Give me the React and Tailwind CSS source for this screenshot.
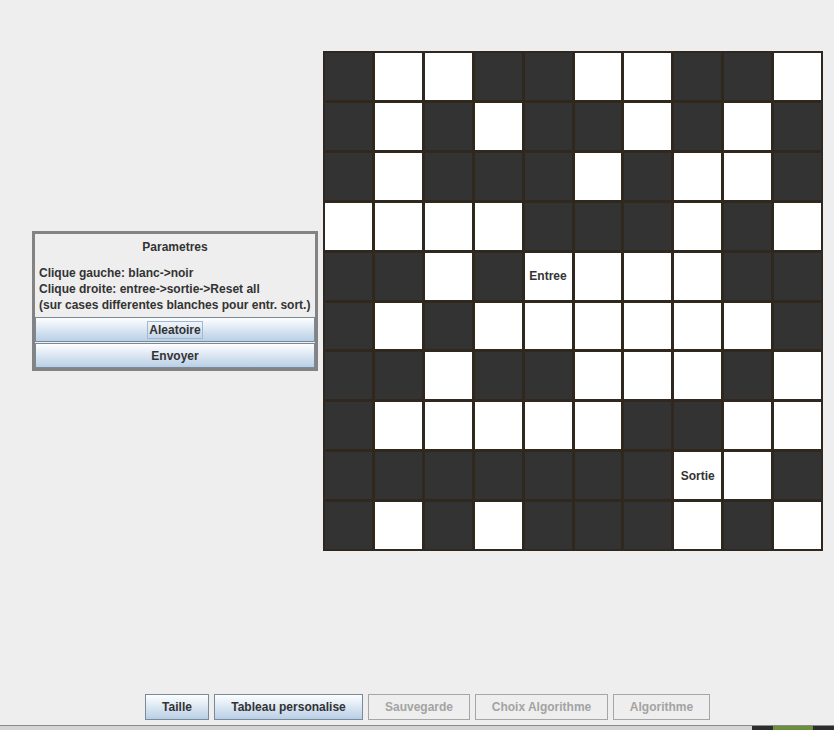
const rows = [
  'DWWDDWWDDW',
  'DWDWDDWDWD',
  'DWDDDWDWWD',
  'WWWWDDDWDW',
  'DDWDEWWWDD',
  'DWDWWWWWWD',
  'DDWDDWWWDW',
  'DWWWWWDDWW',
  'DDDDDDDSWD',
  'DWDWDDDWDW',
];

const font = { fontFamily: '"Liberation Sans", Arial, sans-serif' };

function Cell({ kind }) {
  if (kind === 'D') return <div className="bg-[#333333]" />;
  return (
    <div className="flex items-center justify-center bg-white text-[12px] font-bold text-[#333333]">
      {kind === 'E' ? 'Entree' : kind === 'S' ? 'Sortie' : ''}
    </div>
  );
}

function PanelButton({ children, focus }) {
  return (
    <div className="flex h-[25px] items-center justify-center border border-[#7a8a99] bg-gradient-to-b from-[#fdfeff] to-[#b9cfe6] text-[12px] font-bold text-[#333333]">
      <span className={focus ? 'border border-[#a3b8cc] px-[1px] leading-[16px]' : ''}>{children}</span>
    </div>
  );
}

function BarButton({ children, width, enabled }) {
  return (
    <div
      className={
        'flex h-[26px] items-center justify-center border text-[12px] font-bold ' +
        (enabled
          ? 'border-[#7a8a99] bg-gradient-to-b from-[#fdfeff] to-[#b9cfe6] text-[#333333]'
          : 'border-[#a6a6a6] bg-[#eeeeee] text-[#a3a3a3]')
      }
      style={{ width }}
    >
      {children}
    </div>
  );
}

export default function App() {
  return (
    <div className="flex h-[730px] w-[834px] flex-col overflow-hidden bg-[#eeeeee]" style={font}>
      <div className="flex flex-1 items-start pl-[32px] pt-[51px]">
        <div className="mt-[180px] flex w-[286px] flex-col border-[3px] border-[#838383] bg-[#eeeeee]">
          <div className="pt-[5px] text-center text-[12px] font-bold leading-[16px] text-[#333333]">Parametres</div>
          <div className="px-[4px] pb-[4px] pt-[10px] text-[12px] font-bold leading-[16px] text-[#333333]">
            <div>Clique gauche: blanc-&gt;noir</div>
            <div>Clique droite: entree-&gt;sortie-&gt;Reset all</div>
            <div>(sur cases differentes blanches pour entr. sort.)</div>
          </div>
          <PanelButton focus>Aleatoire</PanelButton>
          <div className="h-[1px]" />
          <PanelButton>Envoyer</PanelButton>
        </div>
        <div className="ml-[5px] grid h-[500px] w-[500px] grid-cols-10 grid-rows-10 gap-[3px] bg-[#30281f] p-[2px]">
          {rows.map((r, i) => r.split('').map((k, j) => <Cell key={i + '-' + j} kind={k} />))}
        </div>
      </div>
      <div className="flex h-[31px] gap-[5px] pl-[145px]">
        <BarButton width={64} enabled>Taille</BarButton>
        <BarButton width={149} enabled>Tableau personalise</BarButton>
        <BarButton width={102}>Sauvegarde</BarButton>
        <BarButton width={133}>Choix Algorithme</BarButton>
        <BarButton width={97}>Algorithme</BarButton>
      </div>
      <div className="h-[1px] bg-[#8a8a8a]" />
      <div className="flex h-[4px]">
        <div className="w-[752px] bg-[#d4d4d4]" />
        <div className="w-[21px] bg-[#2d2d2d]" />
        <div className="w-[40px] bg-[#6b8f3a]" />
        <div className="flex-1 bg-[#2d2d2d]" />
      </div>
    </div>
  );
}
